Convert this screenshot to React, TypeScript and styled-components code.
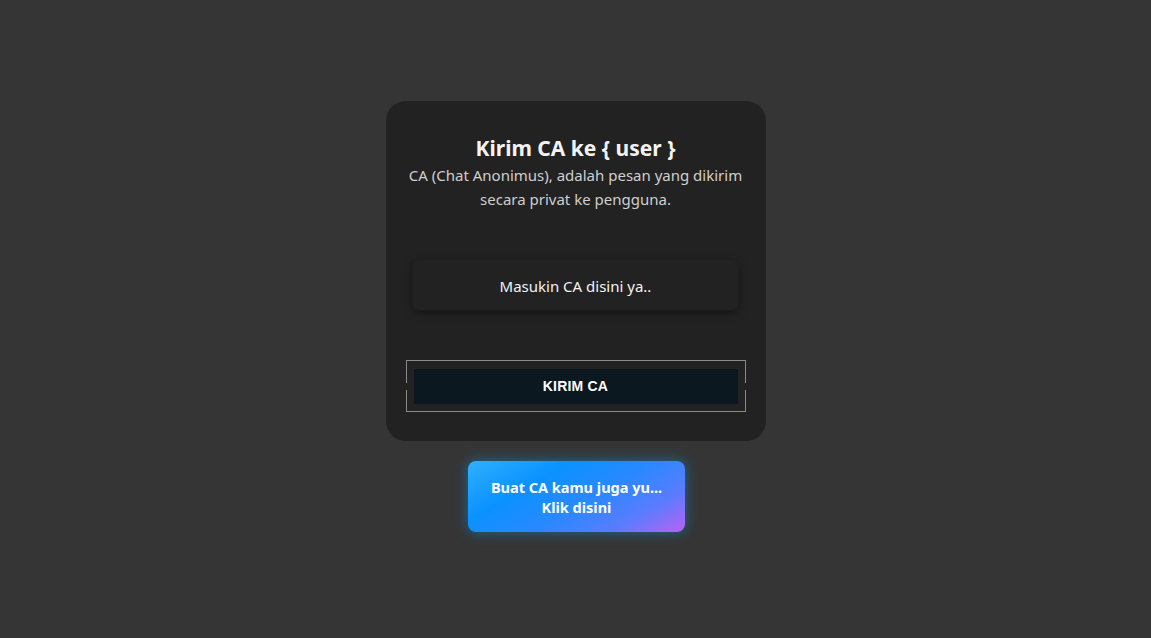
import React from "react";
import styled, { createGlobalStyle } from "styled-components";

const Global = createGlobalStyle`
  html, body { margin: 0; padding: 0; background: #353535; }
  body { font-family: "Noto Sans", "Open Sans", sans-serif; }
  * { box-sizing: border-box; }
`;

const Page = styled.main`
  min-height: 638px;
  display: flex;
  flex-direction: column;
  align-items: center;
  padding-top: 101px;
  gap: 20px;
`;

const Card = styled.section`
  width: 380px;
  height: 340px;
  background: #222222;
  border-radius: 20px;
  display: flex;
  flex-direction: column;
  align-items: center;
  padding-top: 33px;
`;

const Title = styled.h1`
  margin: 0;
  font-size: 21px;
  line-height: 28px;
  font-weight: 700;
  color: #f4f4f4;
`;

const Subtitle = styled.p`
  margin: 0;
  margin-top: 1px;
  width: 350px;
  text-align: center;
  font-size: 15px;
  line-height: 24px;
  color: #cfcfcf;
`;

const InputBox = styled.div`
  margin-top: 50px;
  width: 325px;
  height: 49px;
  border-radius: 6px;
  background: #222222;
  box-shadow: 0 2px 8px rgba(0, 0, 0, 0.55), 0 0 3px rgba(255, 255, 255, 0.08);
  display: flex;
  align-items: center;
  justify-content: center;
  font-size: 15px;
  color: #f2f2f2;
`;

const Frame = styled.div`
  position: relative;
  margin-top: 50px;
  width: 340px;
  height: 52px;
  border: 1px solid #8a8a8a;
  display: flex;
  align-items: center;
  justify-content: center;
`;

const Gap = styled.span<{ $side: "left" | "right" }>`
  position: absolute;
  top: 22px;
  ${(p) => p.$side}: -1px;
  width: 1px;
  height: 7px;
  background: #222222;
`;

const SendButton = styled.button`
  width: 324px;
  height: 35px;
  border: none;
  background: #0b1820;
  color: #ffffff;
  font-family: "Liberation Sans", Arial, sans-serif;
  font-weight: 700;
  font-size: 14px;
  letter-spacing: 0.2px;
`;

const PromoButton = styled.button`
  width: 217px;
  height: 71px;
  margin-left: 2px;
  border: none;
  border-radius: 8px;
  background: linear-gradient(150deg, #30b0ff 0%, #0a92ff 30%, #2a88ff 55%, #5a7cff 78%, #b862f2 100%);
  box-shadow: 0 0 14px rgba(0, 170, 255, 0.45);
  color: #ffffff;
  font-family: "Noto Sans", "Open Sans", sans-serif;
  font-weight: 700;
  font-size: 14.5px;
  line-height: 20px;
`;

export default function App() {
  return (
    <>
      <Global />
      <Page>
        <Card>
          <Title>Kirim CA ke {"{ user }"}</Title>
          <Subtitle>
            CA (Chat Anonimus), adalah pesan yang dikirim secara privat ke pengguna.
          </Subtitle>
          <InputBox>Masukin CA disini ya..</InputBox>
          <Frame>
            <Gap $side="left" />
            <Gap $side="right" />
            <SendButton>KIRIM CA</SendButton>
          </Frame>
        </Card>
        <PromoButton>
          Buat CA kamu juga yu...
          <br />
          Klik disini
        </PromoButton>
      </Page>
    </>
  );
}
